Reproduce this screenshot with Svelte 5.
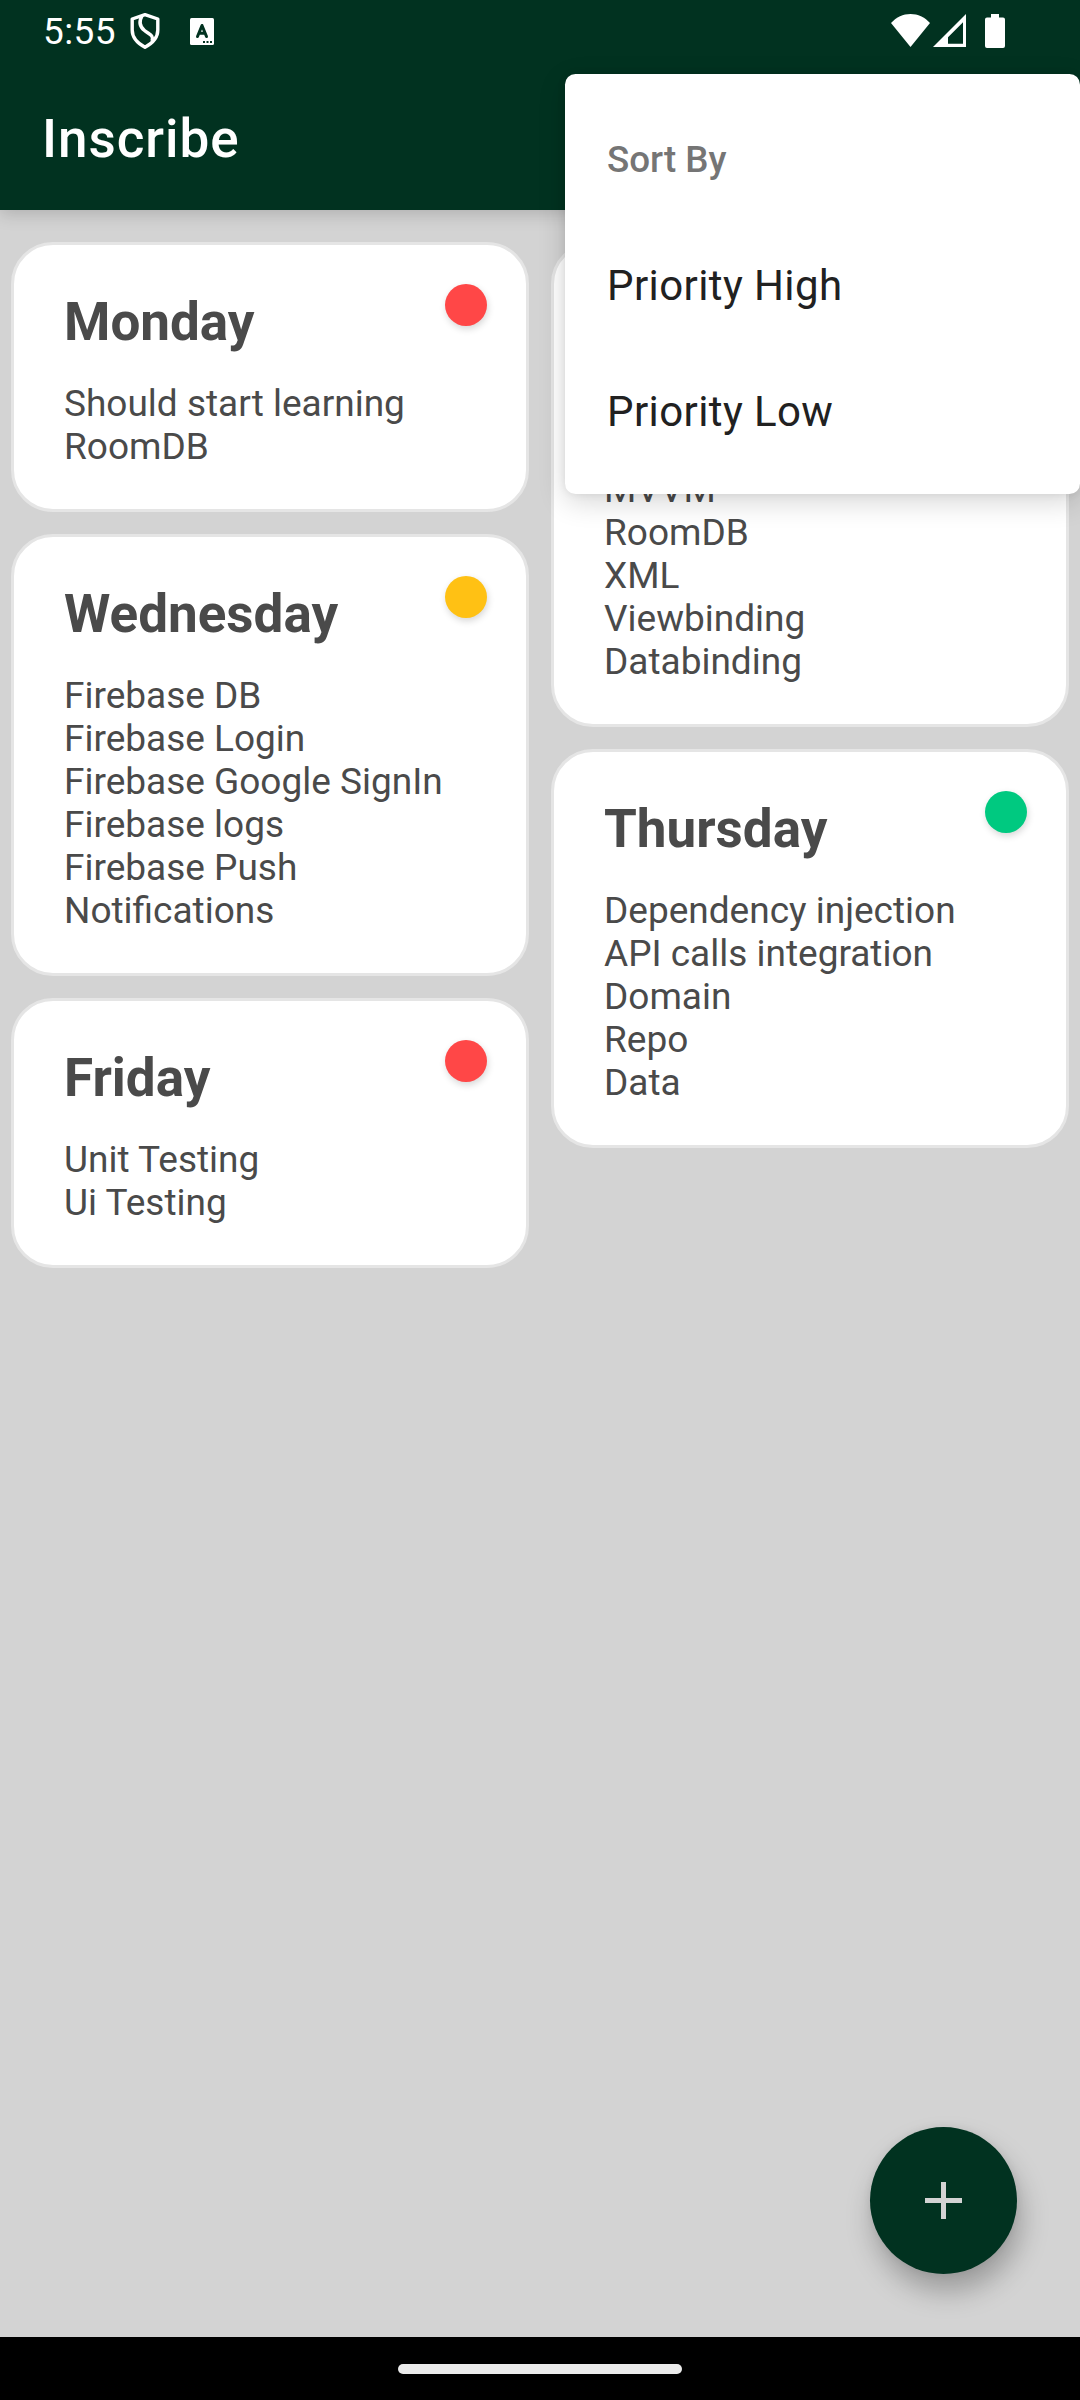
<script>
  const columns = [
    [
      { title: 'Monday', priority: 'high', lines: ['Should start learning', 'RoomDB'] },
      {
        title: 'Wednesday',
        priority: 'medium',
        lines: ['Firebase DB', 'Firebase Login', 'Firebase Google SignIn', 'Firebase logs', 'Firebase Push', 'Notifications'],
      },
      { title: 'Friday', priority: 'high', lines: ['Unit Testing', 'Ui Testing'] },
    ],
    [
      { title: '', priority: 'medium', lines: ['', '', 'MVVM', 'RoomDB', 'XML', 'Viewbinding', 'Databinding'] },
      {
        title: 'Thursday',
        priority: 'low',
        lines: ['Dependency injection', 'API calls integration', 'Domain', 'Repo', 'Data'],
      },
    ],
  ];
  const sortOptions = ['Priority High', 'Priority Low'];
</script>

<div class="screen">
  <header>
    <div class="status">
      <span class="time">5:55</span>
      <svg class="shield" viewBox="0 0 30 36" aria-hidden="true">
        <path d="M15 1.700 27.800 6V17c0 7.500-4.800 13-12.800 17.200C7 30 2.200 24.500 2.200 17V6Z" fill="none" stroke="#fff" stroke-width="3.400" stroke-linejoin="round" />
        <path d="M12 3C8.500 9 9.500 13.500 14.500 17.500S24 22 22 28" fill="none" stroke="#fff" stroke-width="3.400" />
      </svg>
      <svg class="badge" viewBox="0 0 24 27" aria-hidden="true">
        <rect width="24" height="27" rx="1.500" fill="#fff" />
        <path d="M7.500 18.500 12 7.500l4.500 11M9 15.300h6" fill="none" stroke="#013220" stroke-width="3" stroke-linecap="round" stroke-linejoin="round" />
        <path d="M13 23h2v2h-2zM16.500 23h2v2h-2zM20 23h2v2h-2z" fill="#013220" />
      </svg>
      <div class="system">
        <svg class="wifi" viewBox="0 0 39 33" aria-hidden="true"><path d="M0 9C5.500 3 12 0 19.500 0S33.500 3 39 9L19.500 33Z" fill="#fff" /></svg>
        <svg class="signal" viewBox="0 0 33 33" aria-hidden="true"><path d="M33 0V33H0ZM30 8.300 15 23.300V29.700H30Z" fill="#fff" fill-rule="evenodd" /></svg>
        <svg class="battery" viewBox="0 0 20 34" aria-hidden="true"><path d="M6 0h8v3.500h4a2 2 0 0 1 2 2V32a2 2 0 0 1-2 2H2a2 2 0 0 1-2-2V5.500a2 2 0 0 1 2-2h4Z" fill="#fff" /></svg>
      </div>
    </div>
    <h1>Inscribe</h1>
  </header>

  <main>
    {#each columns as column}
      <div class="column">
        {#each column as note}
          <article>
            <div class="heading">
              <h2>{note.title}</h2>
              <i class="dot {note.priority}"></i>
            </div>
            {#each note.lines as line}
              <p>{line}</p>
            {/each}
          </article>
        {/each}
      </div>
    {/each}
  </main>

  <button class="fab" aria-label="Add note">
    <svg viewBox="0 0 37 37" aria-hidden="true"><path d="M18.500 0v37M0 18.500h37" stroke="#d3d3d3" stroke-width="5" /></svg>
  </button>

  <footer><div class="handle"></div></footer>

  <div class="menu">
    <div class="label">Sort By</div>
    {#each sortOptions as option}
      <div class="option">{option}</div>
    {/each}
  </div>
</div>

<style>
  :global(body) { margin: 0; }
  .screen {
    position: relative;
    display: flex;
    flex-direction: column;
    width: 1080px;
    height: 2400px;
    overflow: hidden;
    background: #d3d3d3;
    font-family: Roboto, sans-serif;
    color: #4a4a4a;
  }
  header {
    height: 210px;
    background: #013220;
    color: #fff;
    box-shadow: 0 4px 16px rgba(0, 0, 0, 0.17);
  }
  .status {
    display: flex;
    align-items: flex-start;
    height: 63px;
    padding: 0 75px 0 43px;
  }
  .time {
    width: 87px;
    padding-top: 10px;
    font-size: 37px;
    line-height: 43px;
    letter-spacing: 0.4px;
  }
  .shield { width: 30px; height: 36px; margin-top: 13px; }
  .badge { width: 24px; height: 27px; margin: 18px 0 0 30px; }
  .system { display: flex; margin: 14px 0 0 auto; }
  .wifi { width: 39px; height: 33px; }
  .signal { width: 33px; height: 33px; margin-left: 3px; }
  .battery { width: 20px; height: 34px; margin-left: 19px; }
  h1 {
    margin: 0;
    padding: 0 42px;
    font-size: 53px;
    font-weight: 500;
    line-height: 153px;
    letter-spacing: 0.95px;
  }
  main {
    flex: 1;
    display: grid;
    grid-template-columns: 518px 518px;
    gap: 22px;
    padding: 32px 11px 0;
    align-items: start;
  }
  header { flex: none; }
  .column { display: flex; flex-direction: column; gap: 22px; }
  article {
    box-sizing: border-box;
    padding: 39px 39px 41px 50px;
    border: 3px solid #e5e5e5;
    border-radius: 42px;
    background: #fff;
  }
  .heading {
    display: flex;
    justify-content: space-between;
    align-items: flex-start;
    height: 98px;
  }
  h2 {
    margin: 0;
    padding-top: 7px;
    font-size: 53px;
    font-weight: 700;
    line-height: 62px;
  }
  .dot {
    width: 42px;
    height: 42px;
    border-radius: 50%;
    box-shadow: 1px 3px 7px rgba(0, 0, 0, 0.16);
  }
  .high { background: #ff4747; }
  .medium { background: #ffc114; }
  .low { background: #00c980; }
  p {
    height: 43px;
    margin: 0;
    font-size: 37px;
    line-height: 43px;
    white-space: nowrap;
  }
  .fab {
    position: absolute;
    right: 63px;
    bottom: 126px;
    display: flex;
    align-items: center;
    justify-content: center;
    width: 147px;
    height: 147px;
    padding: 0;
    border: 0;
    border-radius: 50%;
    background: #013220;
    box-shadow: 4px 17px 28px rgba(0, 0, 0, 0.27), 0 0 8px rgba(0, 0, 0, 0.06);
  }
  .fab svg { width: 37px; height: 37px; }
  footer {
    display: flex;
    justify-content: center;
    height: 36px;
    padding-top: 27px;
    background: #000;
  }
  .handle { width: 284px; height: 10px; border-radius: 5px; background: #ebebeb; }
  .menu {
    position: absolute;
    top: 74px;
    right: 0;
    box-sizing: border-box;
    width: 515px;
    height: 420px;
    padding: 23px 42px 19px;
    border-radius: 10.5px;
    background: #fff;
    box-shadow: 0 8px 28px rgba(0, 0, 0, 0.16), 0 0 8px rgba(0, 0, 0, 0.08);
  }
  .label, .option { line-height: 126px; height: 126px; }
  .label { font-size: 36.75px; font-weight: 500; color: #757575; }
  .option { font-size: 42px; color: #212121; letter-spacing: 0.4px; }
</style>
